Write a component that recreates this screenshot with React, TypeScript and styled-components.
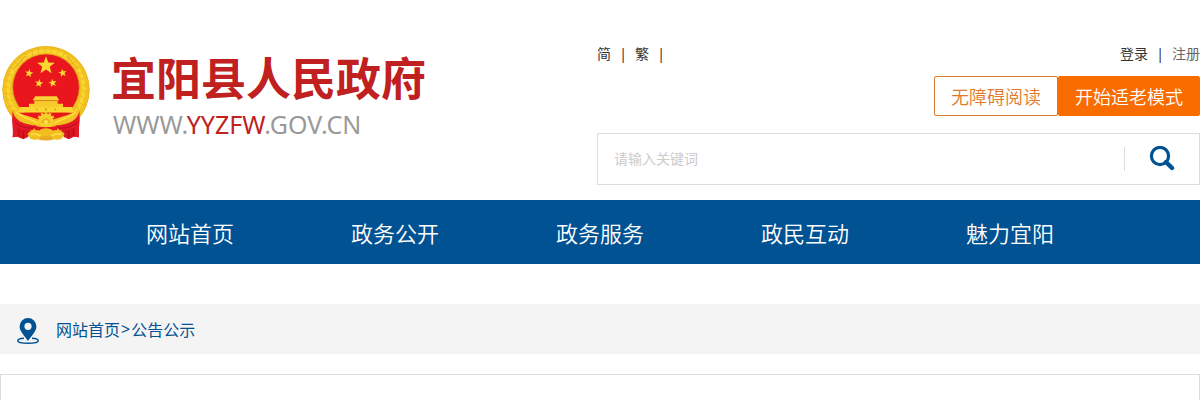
import React from 'react';
import styled, { createGlobalStyle } from 'styled-components';

const BLUE = '#005293';
const ORANGE = '#f96c00';

const GlobalStyle = createGlobalStyle`
  *, *::before, *::after { box-sizing: border-box; }
  body {
    margin: 0;
    background: #fff;
    color: #333;
    font-family: "Noto Sans", "Noto Sans CJK SC", sans-serif;
    font-size: 14px;
  }
  a { color: inherit; text-decoration: none; }
  button, input { font: inherit; }
`;

const Container = styled.div`
  max-width: 1200px;
  margin: 0 auto;
`;

const Header = styled(Container).attrs({ as: 'header' })`
  display: grid;
  grid-template-columns: 597fr 603fr;
  padding: 40px 0 15px;
`;

const Brand = styled.a`
  display: flex;
  align-items: flex-start;
  gap: 11px;
`;

const BrandText = styled.div`
  display: flex;
  flex-direction: column;
  padding-top: 7px;
`;

const SiteName = styled.span`
  color: #c02020;
  font-family: "Noto Sans CJK SC", sans-serif;
  font-size: 45px;
  font-weight: 700;
  line-height: 60px;
  white-space: nowrap;
`;

const Domain = styled.span`
  padding-left: 2px;
  color: #999;
  font-size: 25px;
  line-height: 34px;

  em {
    color: #c02020;
    font-style: normal;
  }
`;

const Tools = styled.div`
  display: flex;
  flex-direction: column;
`;

const TopLinks = styled.div`
  display: flex;
  justify-content: space-between;
  line-height: 28px;
`;

const LinkGroup = styled.div`
  display: flex;
  align-items: center;
`;

const TopLink = styled.a<{ $muted?: boolean }>`
  color: ${(p) => (p.$muted ? '#666' : '#333')};
`;

const Bar = styled.span`
  width: 24px;
  text-align: center;
`;

const ModeButtons = styled.div`
  display: flex;
  justify-content: flex-end;
  margin-top: 8px;
`;

const ModeButton = styled.button<{ $filled?: boolean }>`
  height: 40px;
  padding: 0 16px;
  border: 1px solid ${(p) => (p.$filled ? ORANGE : '#df7a2c')};
  border-radius: 2px;
  background: ${(p) => (p.$filled ? ORANGE : '#fff')};
  color: ${(p) => (p.$filled ? '#fff' : '#df7a2c')};
  font-size: 18px;
  font-weight: 350;
  cursor: pointer;
`;

const SearchForm = styled.form`
  display: flex;
  align-items: center;
  height: 52px;
  margin-top: 17px;
  border: 1px solid #ddd;
`;

const SearchInput = styled.input`
  flex: 1;
  min-width: 0;
  height: 50px;
  padding: 0 16px 2px;
  border: 0;
  outline: 0;
  background: transparent;

  &::placeholder { color: #ccc; opacity: 1; }
`;

const SearchButton = styled.button`
  display: flex;
  align-items: center;
  justify-content: center;
  width: 75px;
  height: 24px;
  padding: 0;
  border: 0;
  border-left: 1px solid #ddd;
  background: none;
  cursor: pointer;
`;

const Nav = styled.nav`
  display: flex;
  justify-content: center;
  height: 64px;
  background: ${BLUE};
`;

const NavLink = styled.a`
  flex: 0 1 205px;
  color: #fff;
  font-size: 22px;
  font-weight: 350;
  line-height: 66px;
  text-align: center;
  white-space: nowrap;
`;

const Breadcrumb = styled(Container).attrs({ as: 'nav' })`
  display: flex;
  align-items: center;
  gap: 16px;
  height: 50px;
  margin-top: 40px;
  padding-left: 16px;
  background: #f4f4f4;
  color: ${BLUE};
  font-size: 16px;
`;

const Trail = styled.div`
  display: flex;
  align-items: center;
  gap: 1px;
`;

const Content = styled(Container).attrs({ as: 'main' })`
  min-height: 240px;
  margin-top: 20px;
  border: 1px solid #ddd;
`;

const Page = styled.div`
  height: 100vh;
  overflow: hidden auto;
  scrollbar-width: none;
`;

const star = (cx: number, cy: number, r: number, turn = 0) =>
  Array.from({ length: 10 }, (_, i) => {
    const a = ((i * 36 - 90 + turn) * Math.PI) / 180;
    const d = i % 2 ? r * 0.42 : r;
    return `${(cx + d * Math.cos(a)).toFixed(1)},${(cy + d * Math.sin(a)).toFixed(1)}`;
  }).join(' ');

const GRAINS = Array.from({ length: 31 }, (_, i) => 128 + i * 9.5);
const TEETH = Array.from({ length: 12 }, (_, i) => i * 30);

const Emblem = () => (
  <svg width="100" height="105" viewBox="0 0 300 315" role="img" aria-label="国徽">
    <path d="M38 207 C34 238 41 268 38 292 L52 290 L70 298 L84 291 L104 262 H172 L192 291 L206 298 L222 290 L237 292 C235 268 241 238 238 207 Z" fill="#d9131f" />
    <circle cx="138" cy="149" r="131" fill="#f3c31f" />
    <circle cx="138" cy="149" r="129" fill="none" stroke="#ebb628" strokeWidth="3" />
    <circle cx="138" cy="146" r="113" fill="none" stroke="#fbd52e" strokeWidth="10" />
    {GRAINS.map((a) => (
      <path
        key={a}
        d="M244 140 Q252 147 264 144"
        transform={`rotate(${a} 138 148)`}
        fill="none"
        stroke="#e3b02a"
        strokeWidth="2"
      />
    ))}
    <path d="M42 86 L76 48 M234 86 L200 48" stroke="#d69b1b" strokeWidth="3" />
    <circle cx="138" cy="142" r="100" fill="#e9171d" stroke="#dda020" strokeWidth="2" />
    <g fill="#fbd631">
      <polygon points={star(138, 77, 28)} />
      <polygon points={star(87, 100, 13, 10)} />
      <polygon points={star(188, 99, 13, -10)} />
      <polygon points={star(117, 130, 13, 10)} />
      <polygon points={star(158, 129, 13, -10)} />
    </g>
    <path d="M106 169 H170 L178 181 H98 Z" fill="#f9d234" />
    <path d="M103 182 H173 V191 H189 V203 H87 V191 H103 Z" fill="#f7cb2b" />
    <path d="M100 182 H176" stroke="#d8981f" strokeWidth="2" />
    <path d="M60 201 H216 L222 218 H54 Z" fill="#fbd631" />
    <path d="M110 206 v5 M138 204 v8 M166 206 v5" stroke="#d7931f" strokeWidth="4" />
    <path d="M54 218 H222 C205 230 185 236 164 240 L138 222 L112 240 C91 236 71 230 54 218 Z" fill="#e9171d" />
    <path d="M38 205 C55 225 92 228 120 241 L138 258 L156 241 C184 228 221 225 238 205 C234 232 210 250 172 258 L138 270 L104 258 C66 250 42 232 38 205 Z" fill="#f3c120" />
    <path d="M48 216 C67 233 91 236 114 250 M228 216 C209 233 185 236 162 250" fill="none" stroke="#ffe24a" strokeWidth="4" />
    <path d="M38 212 C42 239 66 253 110 257 L98 270 C76 272 60 268 50 262 L52 290 L38 292 C42 268 34 238 38 212 Z" fill="#e41827" />
    <path d="M238 212 C234 239 210 253 166 257 L178 270 C200 272 216 268 226 262 L224 290 L237 292 C234 268 241 238 238 212 Z" fill="#e41827" />
    <path d="M46 248 C66 264 88 267 104 262 M230 248 C210 264 188 267 172 262 M56 268 V288 M70 272 V294 M220 268 V288 M206 272 V294" fill="none" stroke="#b30c1a" strokeWidth="3" />
    <g transform="translate(138 243)">
      {TEETH.map((a) => (
        <rect key={a} x="-4" y="-27" width="8" height="10" fill="#f3c120" transform={`rotate(${a})`} />
      ))}
      <circle r="22" fill="#f8cf2c" />
      <path d="M-14 6 A14 14 0 0 1 14 6 Z" fill="#eab021" />
      <circle cy="3" r="6" fill="#ffe24a" />
    </g>
    <path d="M100 256 C120 264 156 264 176 256 L170 272 H106 Z" fill="#e41827" />
    <path d="M82 282 C90 268 108 268 118 272 C122 262 154 262 158 272 C168 268 186 268 194 282 L184 297 C174 300 166 300 156 296 H120 C110 300 102 300 92 297 Z" fill="#f3be20" />
    <path d="M92 284 C104 278 112 282 122 288 M184 284 C172 278 164 282 154 288" fill="none" stroke="#ffe84f" strokeWidth="4" />
    <path d="M122 289 H154 L160 299 C146 302 130 302 116 299 Z" fill="#e8aa24" />
  </svg>
);

const SearchIcon = () => (
  <svg width="26" height="26" viewBox="0 0 26 26" fill="none" stroke={BLUE} aria-hidden="true">
    <circle cx="11" cy="10" r="8.6" strokeWidth="3.2" />
    <path d="M17 16 L23 22" strokeWidth="4.4" strokeLinecap="round" />
  </svg>
);

const PinIcon = () => (
  <svg width="24" height="32" viewBox="0 -4 24 32" aria-hidden="true">
    <path
      d="M8 21.3 C4.5 21.5 1.8 22.4 1.8 23.8 C1.8 25.6 6.5 26.3 12 26.3 C17.5 26.3 22.2 25.6 22.2 23.8 C22.2 22.4 19.5 21.5 16 21.3"
      fill="none"
      stroke={BLUE}
      strokeWidth="1.5"
    />
    <path
      fillRule="evenodd"
      fill={BLUE}
      d="M12 1 A8.4 8.4 0 0 1 20.4 9.4 C20.4 14.5 15 19 12 24 C9 19 3.6 14.5 3.6 9.4 A8.4 8.4 0 0 1 12 1 Z M12 5.7 A3.6 3.6 0 1 0 12 12.9 A3.6 3.6 0 1 0 12 5.7 Z"
    />
  </svg>
);

const NAV_ITEMS = ['网站首页', '政务公开', '政务服务', '政民互动', '魅力宜阳'];

export default function App() {
  return (
    <Page>
      <GlobalStyle />
      <Header>
        <Brand href="#">
          <Emblem />
          <BrandText>
            <SiteName>宜阳县人民政府</SiteName>
            <Domain>
              WWW.<em>YYZFW</em>.GOV.CN
            </Domain>
          </BrandText>
        </Brand>
        <Tools>
          <TopLinks>
            <LinkGroup>
              <TopLink href="#">简</TopLink>
              <Bar>|</Bar>
              <TopLink href="#">繁</TopLink>
              <Bar>|</Bar>
            </LinkGroup>
            <LinkGroup>
              <TopLink href="#">登录</TopLink>
              <Bar>|</Bar>
              <TopLink href="#" $muted>注册</TopLink>
            </LinkGroup>
          </TopLinks>
          <ModeButtons>
            <ModeButton type="button">无障碍阅读</ModeButton>
            <ModeButton type="button" $filled>开始适老模式</ModeButton>
          </ModeButtons>
          <SearchForm role="search" onSubmit={(e) => e.preventDefault()}>
            <SearchInput type="text" placeholder="请输入关键词" aria-label="请输入关键词" />
            <SearchButton type="submit" aria-label="搜索">
              <SearchIcon />
            </SearchButton>
          </SearchForm>
        </Tools>
      </Header>
      <Nav>
        {NAV_ITEMS.map((item) => (
          <NavLink key={item} href="#">{item}</NavLink>
        ))}
      </Nav>
      <Breadcrumb>
        <PinIcon />
        <Trail>
          <a href="#">网站首页</a>
          <span>&gt;</span>
          <a href="#">公告公示</a>
        </Trail>
      </Breadcrumb>
      <Content />
    </Page>
  );
}
